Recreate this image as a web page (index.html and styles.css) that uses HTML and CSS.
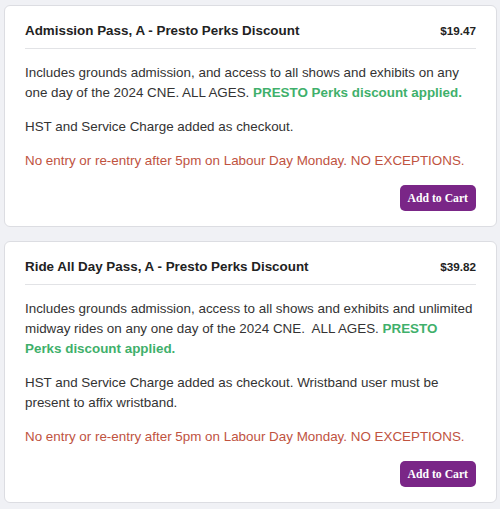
FILE: index.html
```html
<!DOCTYPE html>
<html lang="en">
<head>
  <meta charset="UTF-8">
  <title>CNE Tickets</title>
  <link rel="stylesheet" href="styles.css">
</head>
<body>
  <div class="ticket-list">
    <div class="ticket">
      <div class="ticket-head">
        <h3 class="ticket-name">Admission Pass, A - Presto Perks Discount</h3>
        <span class="ticket-price">$19.47</span>
      </div>
      <p>Includes grounds admission, and access to all shows and exhibits on any one day of the 2024 CNE. ALL AGES. <strong class="perk">PRESTO Perks discount applied.</strong></p>
      <p>HST and Service Charge added as checkout.</p>
      <p class="warning">No entry or re-entry after 5pm on Labour Day Monday. NO EXCEPTIONS.</p>
      <div class="ticket-foot">
        <button class="add-btn">Add to Cart</button>
      </div>
    </div>

    <div class="ticket">
      <div class="ticket-head">
        <h3 class="ticket-name">Ride All Day Pass, A - Presto Perks Discount</h3>
        <span class="ticket-price">$39.82</span>
      </div>
      <p>Includes grounds admission, access to all shows and exhibits and unlimited midway rides on any one day of the 2024 CNE.&nbsp; ALL AGES. <strong class="perk">PRESTO Perks discount applied.</strong></p>
      <p>HST and Service Charge added as checkout. Wristband user must be present to affix wristband.</p>
      <p class="warning">No entry or re-entry after 5pm on Labour Day Monday. NO EXCEPTIONS.</p>
      <div class="ticket-foot">
        <button class="add-btn">Add to Cart</button>
      </div>
    </div>
  </div>
</body>
</html>
```

FILE: styles.css
```css
/* Page */
body {
  margin: 0;
  padding: 5px 3px 0 4px;
  background: #f0f1f5;
  font-family: "Liberation Sans", Arial, sans-serif;
  color: #333;
}

.ticket-list {
  display: flex;
  flex-direction: column;
  gap: 14px;
}

/* Ticket card */
.ticket {
  background: #fff;
  border: 1px solid #dcdde2;
  border-radius: 6px;
  padding: 15px 20px 15px 20px;
}

.ticket-head {
  display: flex;
  justify-content: space-between;
  align-items: baseline;
  padding-bottom: 7px;
  border-bottom: 1px solid #e2e3e6;
  margin-bottom: 14px;
}

.ticket-name {
  margin: 0;
  font-size: 13.4px;
  line-height: 20px;
  font-weight: bold;
  color: #222;
}

.ticket-price {
  font-size: 11.7px;
  font-weight: bold;
  color: #222;
}

.ticket p {
  margin: 0 0 14px 0;
  font-size: 13.4px;
  line-height: 20px;
}

.perk {
  color: #3fb06b;
}

.ticket .warning {
  color: #c0533f;
  margin-bottom: 14px;
}

.ticket-foot {
  display: flex;
  justify-content: flex-end;
}

.add-btn {
  background: #7a2687;
  color: #fff;
  border: none;
  border-radius: 5px;
  height: 26px;
  padding: 0 8px;
  font-family: "Liberation Serif", "Times New Roman", serif;
  font-weight: bold;
  font-size: 11.7px;
  cursor: pointer;
}
```
